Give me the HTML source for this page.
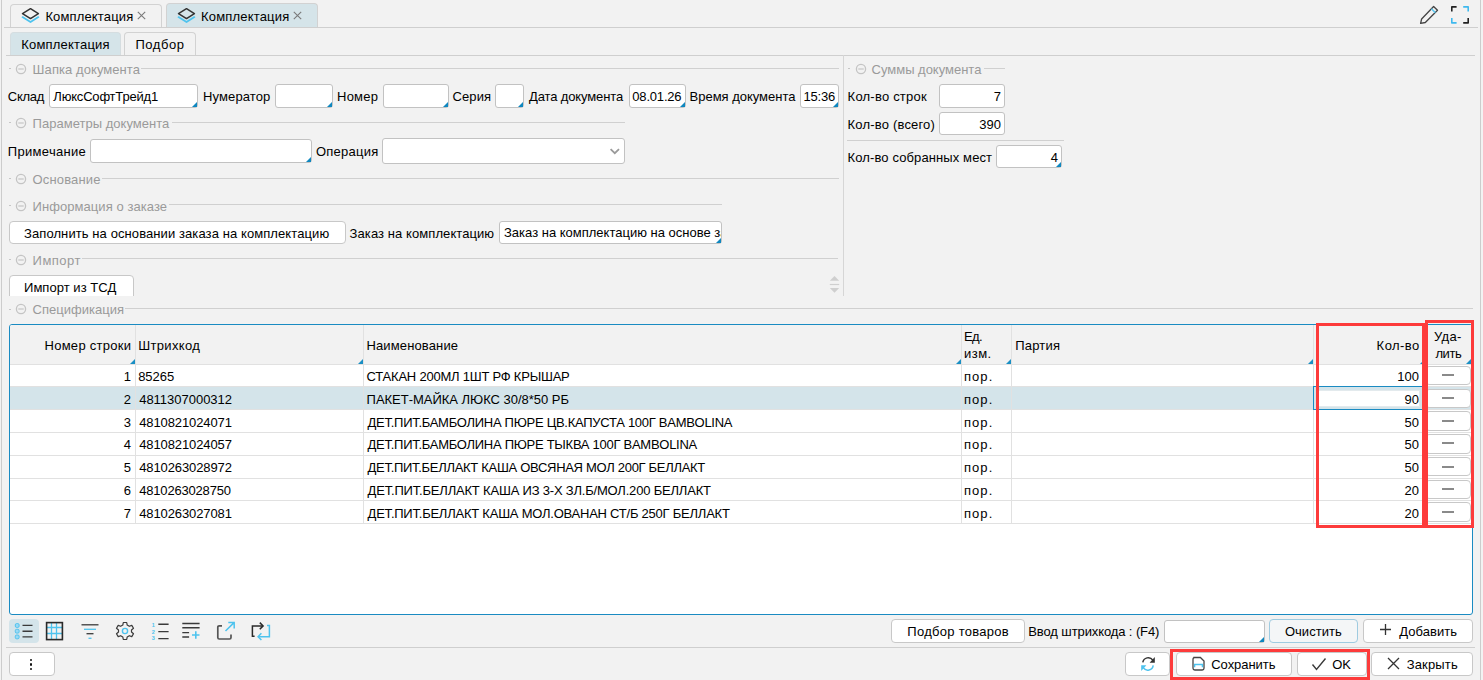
<!DOCTYPE html>
<html><head><meta charset="utf-8"><title>Комплектация</title><style>
*{margin:0;padding:0;box-sizing:border-box}
html,body{width:1483px;height:680px;overflow:hidden;background:#f2f2f2;position:relative}
body{font-family:"Liberation Sans",sans-serif;font-size:13px;color:#000}
.a{position:absolute}
.t{position:absolute;white-space:nowrap;line-height:16px;height:16px}
.inp{position:absolute;background:#fff;border:1px solid #c2c2c2;border-radius:3px}
.btn{position:absolute;background:#fff;border:1px solid #c8c8c8;border-radius:4px}
.tri{position:absolute;width:0;height:0;border-style:solid;border-width:0 0 5px 5px;border-color:transparent transparent #0f87bf transparent}
.htri{position:absolute;width:0;height:0;border-style:solid;border-width:0 0 5px 5px;border-color:transparent transparent #1a8fc4 transparent}
</style></head>
<body>
<div class="a" style="left:1px;top:0px;width:1px;height:680px;background:#cccccc"></div>
<div class="a" style="left:1480px;top:0px;width:1px;height:680px;background:#cccccc"></div>
<div class="a" style="left:10px;top:4px;width:152px;height:24px;border:1px solid #d2d2d2;border-bottom:none;border-radius:4px 4px 0 0;background:#f2f2f2"></div>
<div class="a" style="left:166px;top:3px;width:152px;height:25px;border:1px solid #d2d2d2;border-bottom:none;border-radius:4px 4px 0 0;background:#d5e4e9"></div>
<div class="a" style="left:4px;top:27px;width:1474px;height:1px;background:#cfcfcf"></div>
<svg class="a" style="left:20px;top:5px" width="20" height="20"><path d="M2.5 8.6 L10.5 3.7 L18.4 8.6 L10.5 13.6 Z" fill="none" stroke="#333" stroke-width="1.5" stroke-linejoin="round"/><path d="M2.5 12.1 L10.5 17 L18.4 12.1" fill="none" stroke="#4ec3ee" stroke-width="1.8" stroke-linecap="round" stroke-linejoin="round"/></svg>
<svg class="a" style="left:176px;top:5px" width="20" height="20"><path d="M2.5 8.6 L10.5 3.7 L18.4 8.6 L10.5 13.6 Z" fill="none" stroke="#333" stroke-width="1.5" stroke-linejoin="round"/><path d="M2.5 12.1 L10.5 17 L18.4 12.1" fill="none" stroke="#4ec3ee" stroke-width="1.8" stroke-linecap="round" stroke-linejoin="round"/></svg>
<div class="t " style="top:9.49px;left:45.40px;letter-spacing:0.145px;">Комплектация</div>
<div class="t " style="top:9.49px;left:201.00px;letter-spacing:0.182px;">Комплектация</div>
<svg class="a" style="left:137px;top:11px" width="9" height="9"><path d="M0.8 0.8 L8.2 8.2 M8.2 0.8 L0.8 8.2" stroke="#7a7a7a" stroke-width="1.1"/></svg>
<svg class="a" style="left:293px;top:11px" width="9" height="9"><path d="M0.8 0.8 L8.2 8.2 M8.2 0.8 L0.8 8.2" stroke="#7a7a7a" stroke-width="1.1"/></svg>
<svg class="a" style="left:1418px;top:4px" width="22" height="22"><path d="M2.6 19.3 L3.6 15 L15.6 2.5 L19.5 6.3 L7.3 18.5 Z" fill="none" stroke="#444" stroke-width="1.3" stroke-linejoin="round"/><path d="M13.4 4.8 L17.3 8.6" stroke="#5cc6ee" stroke-width="1.6"/></svg>
<svg class="a" style="left:1450px;top:5px" width="20" height="20"><g fill="none" stroke-width="1.6" stroke-linejoin="round"><path d="M1.8 6.6 V1.9 H6.6" stroke="#222"/><path d="M13.2 1.9 H18.2 V6.6" stroke="#3fb9ee"/><path d="M1.8 13.1 V17.9 H6.6" stroke="#3fb9ee"/><path d="M13.2 17.9 H18.2 V13.1" stroke="#222"/></g></svg>
<div class="a" style="left:10px;top:32px;width:111px;height:24px;border-radius:4px 4px 0 0;background:#d5e4e9;border:1px solid #d5dde0;border-bottom:none"></div>
<div class="a" style="left:124px;top:32px;width:72px;height:24px;border:1px solid #d2d2d2;border-bottom:none;border-radius:4px 4px 0 0;background:#f2f2f2"></div>
<div class="t " style="top:37.49px;left:21.30px;letter-spacing:0.182px;">Комплектация</div>
<div class="t " style="top:37.49px;left:135.50px;letter-spacing:0.520px;">Подбор</div>
<div class="a" style="left:6px;top:55px;width:1469px;height:1px;background:#cfcfcf"></div>
<div class="a" style="left:9px;top:68.0px;width:2px;height:1px;background:#c6c6c6"></div>
<svg class="a" style="left:15px;top:62.5px" width="12" height="12"><circle cx="6" cy="6" r="4.6" fill="none" stroke="#c4c4c4" stroke-width="1.3"/><line x1="3.3" y1="6" x2="8.7" y2="6" stroke="#c4c4c4" stroke-width="1.2"/></svg>
<div class="t " style="top:61.59px;left:32.60px;letter-spacing:0.071px;color:#9a9a9a;">Шапка документа</div>
<div class="a" style="left:141px;top:68px;width:698px;height:1px;background:#d0d0d0"></div>
<div class="t " style="top:89.49px;left:7.80px;letter-spacing:-0.250px;">Склад</div>
<div class="inp" style="left:49px;top:84px;width:149px;height:24px"></div>
<div class="tri" style="left:192px;top:102px"></div>
<div class="t " style="top:89.49px;left:53.30px;letter-spacing:-0.192px;">ЛюксСофтТрейд1</div>
<div class="t " style="top:89.49px;left:203.00px;letter-spacing:0.125px;">Нумератор</div>
<div class="inp" style="left:275px;top:84px;width:58px;height:24px"></div>
<div class="tri" style="left:327px;top:102px"></div>
<div class="t " style="top:89.49px;left:337.00px;letter-spacing:0.250px;">Номер</div>
<div class="inp" style="left:383px;top:84px;width:66px;height:24px"></div>
<div class="tri" style="left:443px;top:102px"></div>
<div class="t " style="top:89.49px;left:452.50px;letter-spacing:0.125px;">Серия</div>
<div class="inp" style="left:495px;top:84px;width:29px;height:24px"></div>
<div class="tri" style="left:518px;top:102px"></div>
<div class="t " style="top:89.49px;left:529.00px;letter-spacing:-0.123px;">Дата документа</div>
<div class="inp" style="left:629px;top:84px;width:57px;height:24px"></div>
<div class="tri" style="left:680px;top:102px"></div>
<div class="t " style="top:89.49px;left:632.30px;letter-spacing:-0.186px;">08.01.26</div>
<div class="t " style="top:89.49px;left:689.60px;letter-spacing:-0.021px;">Время документа</div>
<div class="inp" style="left:800px;top:84px;width:39px;height:24px"></div>
<div class="tri" style="left:833px;top:102px"></div>
<div class="t " style="top:89.49px;left:803.50px;letter-spacing:-0.225px;">15:36</div>
<div class="a" style="left:9px;top:122.0px;width:2px;height:1px;background:#c6c6c6"></div>
<svg class="a" style="left:15px;top:116.5px" width="12" height="12"><circle cx="6" cy="6" r="4.6" fill="none" stroke="#c4c4c4" stroke-width="1.3"/><line x1="3.3" y1="6" x2="8.7" y2="6" stroke="#c4c4c4" stroke-width="1.2"/></svg>
<div class="t " style="top:115.59px;left:32.60px;letter-spacing:0.022px;color:#9a9a9a;">Параметры документа</div>
<div class="a" style="left:172px;top:122px;width:453px;height:1px;background:#d0d0d0"></div>
<div class="t " style="top:144.49px;left:7.80px;letter-spacing:0.311px;">Примечание</div>
<div class="inp" style="left:90px;top:139px;width:222px;height:24px"></div>
<div class="tri" style="left:306px;top:157px"></div>
<div class="t " style="top:144.49px;left:316.00px;letter-spacing:0.229px;">Операция</div>
<div class="inp" style="left:382px;top:138px;width:243px;height:26px"></div>
<svg class="a" style="left:608px;top:146px" width="13" height="10"><path d="M2.6 3.2 L6.8 7.2 L11 3.2" fill="none" stroke="#9a9a9a" stroke-width="1.8"/></svg>
<div class="a" style="left:9px;top:178.0px;width:2px;height:1px;background:#c6c6c6"></div>
<svg class="a" style="left:15px;top:172.5px" width="12" height="12"><circle cx="6" cy="6" r="4.6" fill="none" stroke="#c4c4c4" stroke-width="1.3"/><line x1="3.3" y1="6" x2="8.7" y2="6" stroke="#c4c4c4" stroke-width="1.2"/></svg>
<div class="t " style="top:171.59px;left:32.60px;letter-spacing:0.150px;color:#9a9a9a;">Основание</div>
<div class="a" style="left:102px;top:178px;width:737px;height:1px;background:#d0d0d0"></div>
<div class="a" style="left:9px;top:205.0px;width:2px;height:1px;background:#c6c6c6"></div>
<svg class="a" style="left:15px;top:199.5px" width="12" height="12"><circle cx="6" cy="6" r="4.6" fill="none" stroke="#c4c4c4" stroke-width="1.3"/><line x1="3.3" y1="6" x2="8.7" y2="6" stroke="#c4c4c4" stroke-width="1.2"/></svg>
<div class="t " style="top:198.59px;left:32.60px;letter-spacing:0.061px;color:#9a9a9a;">Информация о заказе</div>
<div class="a" style="left:169px;top:204px;width:553px;height:1px;background:#d0d0d0"></div>
<div class="btn" style="left:9px;top:221px;width:337px;height:23px;"></div>
<div class="t " style="top:226.49px;left:24.00px;letter-spacing:0.091px;">Заполнить на основании заказа на комплектацию</div>
<div class="t " style="top:226.49px;left:349.60px;letter-spacing:0.080px;">Заказ на комплектацию</div>
<div class="inp" style="left:499px;top:221px;width:223px;height:23px;overflow:hidden"><div class="t" style="left:4px;top:3.49px">Заказ на комплектацию на основе заказа</div></div>
<div class="tri" style="left:716px;top:238px"></div>
<div class="a" style="left:9px;top:259.0px;width:2px;height:1px;background:#c6c6c6"></div>
<svg class="a" style="left:15px;top:253.5px" width="12" height="12"><circle cx="6" cy="6" r="4.6" fill="none" stroke="#c4c4c4" stroke-width="1.3"/><line x1="3.3" y1="6" x2="8.7" y2="6" stroke="#c4c4c4" stroke-width="1.2"/></svg>
<div class="t " style="top:252.59px;left:32.60px;letter-spacing:0.480px;color:#9a9a9a;">Импорт</div>
<div class="a" style="left:82px;top:258px;width:756px;height:1px;background:#d0d0d0"></div>
<div class="a" style="left:0;top:0;width:843px;height:296px;overflow:hidden"><div class="btn" style="left:9px;top:275px;width:125px;height:30px"></div></div>
<div class="t " style="top:280.49px;left:24.00px;letter-spacing:0.042px;">Импорт из ТСД</div>
<div class="a" style="left:843px;top:55px;width:1px;height:241px;background:#d6d6d6"></div>
<svg class="a" style="left:829px;top:276px" width="11" height="18"><path d="M0.8 4.8 L5.5 0 L10.2 4.8 Z" fill="#cfcfcf"/><path d="M0.8 8.5 H10.2" stroke="#cfcfcf" stroke-width="1.2"/><path d="M0.8 12 L5.5 16.8 L10.2 12 Z" fill="#cfcfcf"/></svg>
<div class="a" style="left:848px;top:68.0px;width:2px;height:1px;background:#c6c6c6"></div>
<svg class="a" style="left:854.5px;top:62.5px" width="12" height="12"><circle cx="6" cy="6" r="4.6" fill="none" stroke="#c4c4c4" stroke-width="1.3"/><line x1="3.3" y1="6" x2="8.7" y2="6" stroke="#c4c4c4" stroke-width="1.2"/></svg>
<div class="t " style="top:61.59px;left:871.60px;letter-spacing:-0.014px;color:#9a9a9a;">Суммы документа</div>
<div class="a" style="left:984px;top:68px;width:21px;height:1px;background:#d0d0d0"></div>
<div class="t " style="top:89.49px;left:847.60px;letter-spacing:0.218px;">Кол-во строк</div>
<div class="inp" style="left:939px;top:84px;width:66px;height:24px"></div>
<div class="t " style="top:89.49px;right:482.00px;text-align:right;">7</div>
<div class="t " style="top:117.49px;left:847.60px;letter-spacing:0.185px;">Кол-во (всего)</div>
<div class="inp" style="left:939px;top:112px;width:66px;height:23px"></div>
<div class="t " style="top:117.49px;right:482.00px;text-align:right;">390</div>
<div class="a" style="left:847px;top:140px;width:217px;height:1px;background:#d0d0d0"></div>
<div class="t " style="top:150.49px;left:847.60px;letter-spacing:0.110px;">Кол-во собранных мест</div>
<div class="inp" style="left:996px;top:145px;width:66px;height:23px"></div>
<div class="tri" style="left:1056px;top:162px"></div>
<div class="t " style="top:150.49px;right:425.00px;text-align:right;">4</div>
<div class="a" style="left:9px;top:308.5px;width:2px;height:1px;background:#c6c6c6"></div>
<svg class="a" style="left:15px;top:303px" width="12" height="12"><circle cx="6" cy="6" r="4.6" fill="none" stroke="#c4c4c4" stroke-width="1.3"/><line x1="3.3" y1="6" x2="8.7" y2="6" stroke="#c4c4c4" stroke-width="1.2"/></svg>
<div class="t " style="top:302.09px;left:32.60px;letter-spacing:0.009px;color:#9a9a9a;">Спецификация</div>
<div class="a" style="left:125px;top:308px;width:1348px;height:1px;background:#d0d0d0"></div>
<div class="a" style="left:9px;top:324px;width:1464px;height:291px;background:#fff;border:1px solid #1a8bc2;border-radius:3px;overflow:hidden">
<div class="a" style="left:0px;top:0px;width:1464px;height:39px;background:#f2f2f2"></div>
<div class="a" style="left:0px;top:62px;width:1464px;height:22px;background:#d4e4ea"></div>
<div class="a" style="left:0px;top:39px;width:1462px;height:1px;background:#e1e1e1"></div>
<div class="a" style="left:0px;top:61px;width:1462px;height:1px;background:#e1e1e1"></div>
<div class="a" style="left:0px;top:84px;width:1462px;height:1px;background:#e1e1e1"></div>
<div class="a" style="left:0px;top:107px;width:1462px;height:1px;background:#e1e1e1"></div>
<div class="a" style="left:0px;top:130px;width:1462px;height:1px;background:#e1e1e1"></div>
<div class="a" style="left:0px;top:153px;width:1462px;height:1px;background:#e1e1e1"></div>
<div class="a" style="left:0px;top:175px;width:1462px;height:1px;background:#e1e1e1"></div>
<div class="a" style="left:0px;top:198px;width:1462px;height:1px;background:#e1e1e1"></div>
<div class="a" style="left:125px;top:0px;width:1px;height:198px;background:#e1e1e1"></div>
<div class="a" style="left:353px;top:0px;width:1px;height:198px;background:#e1e1e1"></div>
<div class="a" style="left:951px;top:0px;width:1px;height:198px;background:#e1e1e1"></div>
<div class="a" style="left:1001px;top:0px;width:1px;height:198px;background:#e1e1e1"></div>
<div class="a" style="left:1303px;top:0px;width:1px;height:198px;background:#e1e1e1"></div>
<div class="a" style="left:1415px;top:0px;width:1px;height:198px;background:#e1e1e1"></div>
</div>
<div class="htri" style="left:130px;top:359px"></div>
<div class="htri" style="left:358px;top:359px"></div>
<div class="htri" style="left:956px;top:359px"></div>
<div class="htri" style="left:1006px;top:359px"></div>
<div class="htri" style="left:1308px;top:359px"></div>
<div class="htri" style="left:1420px;top:359px"></div>
<div class="htri" style="left:1466px;top:359px"></div>
<div class="t " style="top:338.49px;left:44.50px;letter-spacing:0.273px;">Номер строки</div>
<div class="t " style="top:338.49px;left:138.20px;letter-spacing:0.343px;">Штрихкод</div>
<div class="t " style="top:338.49px;left:366.50px;letter-spacing:0.127px;">Наименование</div>
<div class="t " style="top:329.49px;left:964.00px;letter-spacing:-0.600px;">Ед.</div>
<div class="t " style="top:346.49px;left:964.00px;letter-spacing:0.467px;">изм.</div>
<div class="t " style="top:338.49px;left:1015.30px;letter-spacing:0.180px;">Партия</div>
<div class="t " style="top:338.49px;left:1376.60px;letter-spacing:0.460px;">Кол-во</div>
<div class="t " style="top:329.49px;left:1434.00px;letter-spacing:0.333px;">Уда-</div>
<div class="t " style="top:346.49px;left:1435.40px;letter-spacing:-0.367px;">лить</div>
<div class="a" style="left:1313px;top:386px;width:112px;height:24px;border:1px solid #1a8bc2;background:#d4e4ea"></div>
<div class="a" style="left:1318px;top:390px;width:102px;height:17px;background:#fff;border:1px solid #e3eaed"></div>
<div class="t " style="top:369.49px;right:1352.00px;text-align:right;">1</div>
<div class="t " style="top:369.49px;left:138.20px;letter-spacing:-0.050px;">85265</div>
<div class="t " style="top:369.49px;left:366.60px;letter-spacing:-0.224px;">СТАКАН 200МЛ 1ШТ РФ КРЫШАР</div>
<div class="t " style="top:369.49px;left:963.90px;letter-spacing:1.100px;">пор.</div>
<div class="t " style="top:369.49px;right:64.00px;text-align:right;">100</div>
<div class="btn" style="left:1425px;top:366px;width:46px;height:19px;border-radius:4px"></div>
<div class="a" style="left:1442px;top:374px;width:12px;height:2px;background:#8a8a8a"></div>
<div class="t " style="top:392.49px;right:1352.00px;text-align:right;">2</div>
<div class="t " style="top:392.49px;left:139.20px;letter-spacing:-0.017px;">4811307000312</div>
<div class="t " style="top:392.49px;left:366.60px;letter-spacing:-0.023px;">ПАКЕТ-МАЙКА ЛЮКС 30/8*50 РБ</div>
<div class="t " style="top:392.49px;left:963.90px;letter-spacing:1.100px;">пор.</div>
<div class="t " style="top:392.49px;right:64.00px;text-align:right;">90</div>
<div class="btn" style="left:1425px;top:389px;width:46px;height:19px;border-radius:4px"></div>
<div class="a" style="left:1442px;top:397px;width:12px;height:2px;background:#8a8a8a"></div>
<div class="t " style="top:415.49px;right:1352.00px;text-align:right;">3</div>
<div class="t " style="top:415.49px;left:139.20px;letter-spacing:-0.100px;">4810821024071</div>
<div class="t " style="top:415.49px;left:367.60px;letter-spacing:-0.279px;">ДЕТ.ПИТ.БАМБОЛИНА ПЮРЕ ЦВ.КАПУСТА 100Г BAMBOLINA</div>
<div class="t " style="top:415.49px;left:963.90px;letter-spacing:1.100px;">пор.</div>
<div class="t " style="top:415.49px;right:64.00px;text-align:right;">50</div>
<div class="btn" style="left:1425px;top:411px;width:46px;height:20px;border-radius:4px"></div>
<div class="a" style="left:1442px;top:420px;width:12px;height:2px;background:#8a8a8a"></div>
<div class="t " style="top:437.49px;right:1352.00px;text-align:right;">4</div>
<div class="t " style="top:437.49px;left:139.20px;letter-spacing:-0.100px;">4810821024057</div>
<div class="t " style="top:437.49px;left:367.60px;letter-spacing:-0.276px;">ДЕТ.ПИТ.БАМБОЛИНА ПЮРЕ ТЫКВА 100Г BAMBOLINA</div>
<div class="t " style="top:437.49px;left:963.90px;letter-spacing:1.100px;">пор.</div>
<div class="t " style="top:437.49px;right:64.00px;text-align:right;">50</div>
<div class="btn" style="left:1425px;top:434px;width:46px;height:20px;border-radius:4px"></div>
<div class="a" style="left:1442px;top:442px;width:12px;height:2px;background:#8a8a8a"></div>
<div class="t " style="top:460.49px;right:1352.00px;text-align:right;">5</div>
<div class="t " style="top:460.49px;left:139.20px;letter-spacing:-0.100px;">4810263028972</div>
<div class="t " style="top:460.49px;left:367.60px;letter-spacing:-0.298px;">ДЕТ.ПИТ.БЕЛЛАКТ КАША ОВСЯНАЯ МОЛ 200Г БЕЛЛАКТ</div>
<div class="t " style="top:460.49px;left:963.90px;letter-spacing:1.100px;">пор.</div>
<div class="t " style="top:460.49px;right:64.00px;text-align:right;">50</div>
<div class="btn" style="left:1425px;top:457px;width:46px;height:19px;border-radius:4px"></div>
<div class="a" style="left:1442px;top:466px;width:12px;height:2px;background:#8a8a8a"></div>
<div class="t " style="top:483.49px;right:1352.00px;text-align:right;">6</div>
<div class="t " style="top:483.49px;left:139.20px;letter-spacing:-0.183px;">4810263028750</div>
<div class="t " style="top:483.49px;left:367.60px;letter-spacing:-0.188px;">ДЕТ.ПИТ.БЕЛЛАКТ КАША ИЗ 3-Х ЗЛ.Б/МОЛ.200 БЕЛЛАКТ</div>
<div class="t " style="top:483.49px;left:963.90px;letter-spacing:1.100px;">пор.</div>
<div class="t " style="top:483.49px;right:64.00px;text-align:right;">20</div>
<div class="btn" style="left:1425px;top:480px;width:46px;height:19px;border-radius:4px"></div>
<div class="a" style="left:1442px;top:488px;width:12px;height:2px;background:#8a8a8a"></div>
<div class="t " style="top:506.49px;right:1352.00px;text-align:right;">7</div>
<div class="t " style="top:506.49px;left:139.20px;letter-spacing:-0.100px;">4810263027081</div>
<div class="t " style="top:506.49px;left:367.60px;letter-spacing:-0.231px;">ДЕТ.ПИТ.БЕЛЛАКТ КАША МОЛ.ОВАНАН СТ/Б 250Г БЕЛЛАКТ</div>
<div class="t " style="top:506.49px;left:963.90px;letter-spacing:1.100px;">пор.</div>
<div class="t " style="top:506.49px;right:64.00px;text-align:right;">20</div>
<div class="btn" style="left:1425px;top:502px;width:46px;height:20px;border-radius:4px"></div>
<div class="a" style="left:1442px;top:511px;width:12px;height:2px;background:#8a8a8a"></div>
<div class="a" style="left:1316px;top:323px;width:109px;height:205px;border:3px solid #fd3b3b"></div>
<div class="a" style="left:1425px;top:320px;width:49px;height:208px;border:3px solid #fd3b3b"></div>
<div class="a" style="left:9px;top:619px;width:30px;height:24px;background:#d4e4ea;border-radius:4px"></div>
<svg class="a" style="left:14px;top:621px" width="22" height="20"><g fill="#9ad9f5" stroke="#4ec3ee" stroke-width="1"><rect x="1.3" y="2.6" width="3.8" height="3.8" rx="1.3"/><rect x="1.3" y="8.3" width="3.8" height="3.8" rx="1.3"/><rect x="1.3" y="14" width="3.8" height="3.8" rx="1.3"/></g><g stroke="#3a3a3a" stroke-width="1.4"><path d="M8.5 4.4 H18.5 M8.5 10.2 H18.5 M8.5 15.9 H18.5"/></g></svg>
<svg class="a" style="left:45px;top:621px" width="19" height="20"><path d="M6.5 1.5 V18.5 M11.5 1.5 V18.5 M1.5 6.5 H17.5 M1.5 12.5 H17.5" stroke="#4ec3ee" stroke-width="1.3"/><rect x="1.6" y="1.6" width="15.8" height="17" fill="none" stroke="#2a2a2a" stroke-width="1.6"/></svg>
<svg class="a" style="left:80px;top:621px" width="20" height="20"><path d="M1.5 3.8 H18.5" stroke="#3a3a3a" stroke-width="1.3"/><path d="M4 8.3 H16" stroke="#4ec3ee" stroke-width="1.3"/><path d="M6.5 12.7 H13.5" stroke="#3a3a3a" stroke-width="1.3"/><path d="M8.5 17.3 H11.5" stroke="#4ec3ee" stroke-width="1.3"/></svg>
<svg class="a" style="left:115px;top:621px" width="20" height="20"><path d="M8.3 1.5 H11.7 L12.2 4.1 L14.3 5.3 L16.8 4.4 L18.5 7.3 L16.5 9 V11 L18.5 12.7 L16.8 15.6 L14.3 14.7 L12.2 15.9 L11.7 18.5 H8.3 L7.8 15.9 L5.7 14.7 L3.2 15.6 L1.5 12.7 L3.5 11 V9 L1.5 7.3 L3.2 4.4 L5.7 5.3 L7.8 4.1 Z" fill="none" stroke="#3a3a3a" stroke-width="1.2" stroke-linejoin="round"/><circle cx="10" cy="10" r="2.6" fill="none" stroke="#4ec3ee" stroke-width="1.4"/></svg>
<svg class="a" style="left:150px;top:621px" width="22" height="20"><g fill="#4ec3ee" font-family="Liberation Sans" font-size="5.5" font-weight="bold"><text x="1.8" y="5.5">1</text><text x="1.8" y="12.5">2</text><text x="1.8" y="19">3</text></g><path d="M8.3 3.3 H18.6 M8.3 10.6 H18.6 M8.3 17.6 H18.6" stroke="#3a3a3a" stroke-width="1.4"/></svg>
<svg class="a" style="left:181px;top:621px" width="20" height="20"><path d="M1.3 2.5 H18.6 M1.3 6.8 H18.6 M1.3 11.6 H8.1 M1.3 16 H8.1" stroke="#3a3a3a" stroke-width="1.4"/><path d="M11 14 H18.5 M14.8 10.3 V17.8" stroke="#4ec3ee" stroke-width="1.6"/></svg>
<svg class="a" style="left:215px;top:620px" width="22" height="22"><path d="M7 5.8 H4.2 Q2.8 5.8 2.8 7.2 V17.6 Q2.8 19 4.2 19 H14.6 Q16 19 16 17.6 V14.5" fill="none" stroke="#555" stroke-width="1.7"/><path d="M10.5 11 L19 2.6 M13.3 2.6 H19.2 V8.5" fill="none" stroke="#4ec3ee" stroke-width="1.5"/></svg>
<svg class="a" style="left:250px;top:620px" width="22" height="22"><g fill="none" stroke-width="1.5"><path d="M4.6 16.2 H2.4 V5.9 H13" stroke="#2a2a2a"/><path d="M9.8 2.6 L13.1 5.9 L9.8 9.2" stroke="#2a2a2a"/><path d="M17 5.4 H19.4 V16.7 H8.3" stroke="#4ec3ee"/><path d="M11.4 13.3 L8.1 16.7 L11.4 20" stroke="#4ec3ee"/></g></svg>
<div class="btn" style="left:891px;top:619px;width:134px;height:24px;"></div>
<div class="t " style="top:624.49px;left:907.30px;letter-spacing:0.277px;">Подбор товаров</div>
<div class="t " style="top:624.49px;left:1028.30px;letter-spacing:-0.105px;">Ввод штрихкода : (F4)</div>
<div class="inp" style="left:1164px;top:620px;width:101px;height:23px"></div>
<div class="tri" style="left:1259px;top:637px"></div>
<div class="a" style="left:1269px;top:619px;width:89px;height:24px;background:#f4f6f7;border:1px solid #9fcbe0;border-radius:4px"></div>
<div class="t " style="top:624.49px;left:1284.90px;letter-spacing:0.043px;">Очистить</div>
<div class="btn" style="left:1363px;top:619px;width:110px;height:24px;"></div>
<svg class="a" style="left:1379px;top:623px" width="13" height="13"><path d="M6.5 1 V12 M1 6.5 H12" stroke="#333" stroke-width="1.3"/></svg>
<div class="t " style="top:624.49px;left:1399.20px;letter-spacing:0.071px;">Добавить</div>
<div class="a" style="left:6px;top:647px;width:1469px;height:1px;background:#cfcfcf"></div>
<div class="btn" style="left:9px;top:652px;width:46px;height:24px;"></div>
<div class="a" style="left:30.3px;top:659.1px;width:2.2px;height:2.2px;border-radius:50%;background:#111"></div>
<div class="a" style="left:30.3px;top:663.4px;width:2.2px;height:2.2px;border-radius:50%;background:#111"></div>
<div class="a" style="left:30.3px;top:667.6999999999999px;width:2.2px;height:2.2px;border-radius:50%;background:#111"></div>
<div class="btn" style="left:1125px;top:652px;width:45px;height:24px;"></div>
<svg class="a" style="left:1139px;top:655px" width="18" height="18"><path d="M3.8 7.3 A5.5 5.5 0 0 1 13.8 5.2" fill="none" stroke="#333" stroke-width="1.5"/><path d="M15.8 2 V7.8 H10.6 Z" fill="#333"/><path d="M14.2 10.3 A5.5 5.5 0 0 1 4.2 12.7" fill="none" stroke="#4ec3ee" stroke-width="1.5"/><path d="M2.2 16 V10.2 H7.4 Z" fill="#4ec3ee"/></svg>
<div class="btn" style="left:1176px;top:652px;width:116px;height:24px;"></div>
<svg class="a" style="left:1190px;top:655px" width="17" height="17"><path d="M3.3 2.5 H10.4 L14 6.1 V13.2 Q14 15 12.2 15 H4.8 Q3 15 3 13.2 V4.3 Q3 2.5 4.8 2.5 Z" fill="none" stroke="#444" stroke-width="1.3"/><path d="M4.6 12.2 V9.5 H12.4 V12.2" fill="none" stroke="#4ec3ee" stroke-width="1.4"/></svg>
<div class="t " style="top:657.49px;left:1211.30px;letter-spacing:-0.062px;">Сохранить</div>
<div class="btn" style="left:1297px;top:652px;width:70px;height:24px;"></div>
<svg class="a" style="left:1310px;top:656px" width="18" height="16"><path d="M2.5 8.5 L6.5 13.5 L15.5 2.5" fill="none" stroke="#3a3a3a" stroke-width="1.4"/></svg>
<div class="t " style="top:657.49px;left:1332.20px;letter-spacing:0.000px;">OK</div>
<div class="btn" style="left:1371px;top:652px;width:102px;height:24px;"></div>
<svg class="a" style="left:1386px;top:656px" width="15" height="15"><path d="M2 2 L13 13 M13 2 L2 13" stroke="#333" stroke-width="1.3"/></svg>
<div class="t " style="top:657.49px;left:1406.70px;letter-spacing:0.167px;">Закрыть</div>
<div class="a" style="left:1170px;top:649px;width:200px;height:31px;border:3px solid #fd3b3b"></div>
</body></html>
